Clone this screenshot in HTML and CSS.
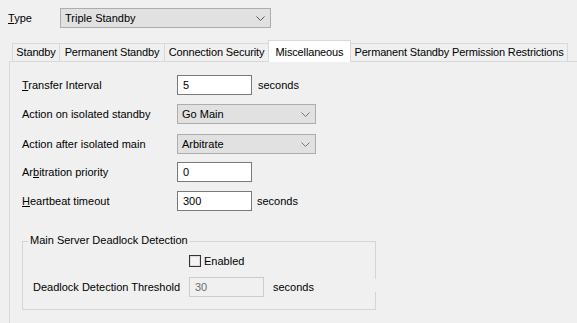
FILE: index.html
```html
<!DOCTYPE html>
<html lang="en">
<head>
    <meta charset="UTF-8">
    <title>Triple Standby Settings</title>
    <link rel="stylesheet" href="styles.css">
</head>
<body>

    <div class="type-row">
        <span class="type-label"><u>T</u>ype</span>
        <div class="dropdown type-select">
            <span>Triple Standby</span>
            <svg width="9" height="5" viewBox="0 0 9 5"><polyline points="0.5,0.5 4.5,4.5 8.5,0.5" fill="none" stroke="#555" stroke-width="1"/></svg>
        </div>
    </div>

    <div class="tabs">
        <div class="tab tab-standby">Standby</div>
        <div class="tab tab-permanent">Permanent Standby</div>
        <div class="tab tab-connection">Connection Security</div>
        <div class="tab tab-misc active">Miscellaneous</div>
        <div class="tab tab-restrictions">Permanent Standby Permission Restrictions</div>
    </div>

    <section class="panel">
        <div class="field">
            <span class="field-label"><u>T</u>ransfer Interval</span>
            <div class="textbox">5</div>
            <span class="unit">seconds</span>
        </div>
        <div class="field gap-b">
            <span class="field-label">Action on isolated standby</span>
            <div class="dropdown small">
                <span>Go Main</span>
                <svg width="9" height="5" viewBox="0 0 9 5"><polyline points="0.5,0.5 4.5,4.5 8.5,0.5" fill="none" stroke="#777" stroke-width="1"/></svg>
            </div>
        </div>
        <div class="field gap-c">
            <span class="field-label">Action after isolated main</span>
            <div class="dropdown small">
                <span>Arbitrate</span>
                <svg width="9" height="5" viewBox="0 0 9 5"><polyline points="0.5,0.5 4.5,4.5 8.5,0.5" fill="none" stroke="#777" stroke-width="1"/></svg>
            </div>
        </div>
        <div class="field gap-d">
            <span class="field-label">Ar<u>b</u>itration priority</span>
            <div class="textbox">0</div>
        </div>
        <div class="field gap-b">
            <span class="field-label"><u>H</u>eartbeat timeout</span>
            <div class="textbox">300</div>
            <span class="unit tight">seconds</span>
        </div>

        <div class="group">
            <span class="legend">Main Server Deadlock Detection</span>
            <span class="border-gap"></span>
            <div class="check-row">
                <span class="checkbox"></span>
                <span>Enabled</span>
            </div>
            <div class="field threshold">
                <span class="group-label">Deadlock Detection Threshold</span>
                <div class="textbox disabled">30</div>
                <span class="unit wide">seconds</span>
            </div>
        </div>
    </section>

</body>
</html>
```

FILE: styles.css
```css
* {
  margin: 0;
  padding: 0;
  box-sizing: border-box;
}

body {
    width: 577px;
    height: 323px;
    overflow: hidden;
    background-color: #f0f0f0;
    color: #000;
    font-family: "Liberation Sans", Arial, sans-serif;
    font-size: 11px;
}

u {
    text-decoration: underline;
    text-underline-offset: 1px;
}

.type-row {
    display: flex;
    align-items: center;
    padding: 8px 0 0 8px;
}

.type-label {
    width: 52px;
}

.dropdown {
    display: flex;
    align-items: center;
    justify-content: space-between;
    height: 20px;
    padding: 0 5px 0 4px;
    background-color: #e1e1e1;
    border: 1px solid #adadad;
}

.type-select {
    width: 211px;
}

.dropdown.small {
    width: 139px;
}

.tabs {
    display: flex;
    align-items: flex-end;
    height: 21px;
    margin-top: 12px;
    padding-left: 12px;
}

.tab {
    height: 18px;
    line-height: 17px;
    margin-right: -1px;
    border: 1px solid #d9d9d9;
    border-bottom: none;
    text-align: center;
    letter-spacing: -0.15px;
    white-space: nowrap;
    overflow: hidden;
}

.tab-standby { width: 48px; }
.tab-permanent { width: 106px; }
.tab-connection { width: 105px; }
.tab-misc { width: 83px; }
.tab-restrictions { width: 218px; }

.tab.active {
    position: relative;
    z-index: 1;
    height: 22px;
    padding-top: 3px;
    margin-bottom: -1px;
    background-color: #fff;
}

.panel {
    width: 568px;
    height: 270px;
    margin-left: 9px;
    padding: 13px 0 0 12px;
    border-top: 1px solid #d9d9d9;
    border-left: 1px solid #d9d9d9;
}

.field {
    display: flex;
    align-items: center;
    height: 20px;
}

.gap-b {
    margin-top: 9px;
}

.gap-c {
    margin-top: 10px;
}

.gap-d {
    margin-top: 8px;
}

.field-label {
    width: 155px;
}

.textbox {
    width: 75px;
    height: 20px;
    line-height: 18px;
    padding-left: 5px;
    background-color: #fff;
    border: 1px solid #7a7a7a;
}

.textbox.disabled {
    background-color: #f0f0f0;
    border-color: #cccccc;
    color: #6d6d6d;
}

.unit {
    margin-left: 6px;
}

.unit.tight {
    margin-left: 5px;
}

.unit.wide {
    margin-left: 9px;
}

.group {
    position: relative;
    width: 354px;
    height: 69px;
    margin-top: 30px;
    padding: 13px 0 0 10px;
    border: 1px solid #d5d5d5;
}

.legend {
    position: absolute;
    top: -8px;
    left: 5px;
    padding: 0 2px;
    line-height: 13px;
    background-color: #f0f0f0;
}

.border-gap {
    position: absolute;
    top: 37px;
    right: -2px;
    width: 3px;
    height: 13px;
    background-color: #f0f0f0;
}

.check-row {
    display: flex;
    align-items: center;
    height: 12px;
    padding-left: 156px;
}

.checkbox {
    width: 12px;
    height: 12px;
    margin-right: 3px;
    background-color: #f4f4f4;
    border: 1px solid #333;
    box-shadow: inset 0 0 0 1px #dcdcdc;
}

.threshold {
    margin-top: 10px;
}

.group-label {
    width: 156px;
}
```
